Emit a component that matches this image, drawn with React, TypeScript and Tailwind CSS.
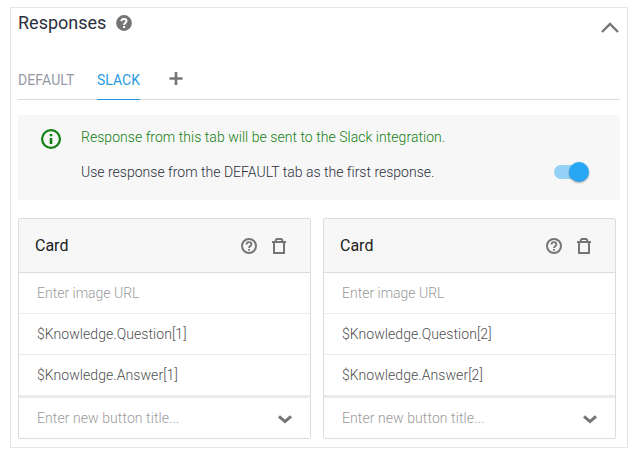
import React from "react";

function FilledHelp() {
  return (
    <svg className="block h-4 w-4" viewBox="0 0 16 16">
      <circle cx="8" cy="8" r="7.9" fill="#757575" />
      <path d="M5.4 6.2C5.5 4.7 6.5 3.9 8 3.9S10.5 4.8 10.5 6.1C10.5 7.8 8.1 7.8 8.1 9.9M8.1 10.9V12.9" fill="none" stroke="#fff" strokeWidth="2" />
    </svg>
  );
}

function OutlineHelp() {
  return (
    <svg className="block h-4 w-4" viewBox="0 0 16 16" fill="none" stroke="#757575">
      <circle cx="8" cy="8" r="7" strokeWidth="2" />
      <path d="M5.6 6.5C5.6 5.1 6.5 4.2 8 4.2S10.4 5.1 10.4 6.4C10.4 7.9 8 8 8 10M8 11V12.8" strokeWidth="1.8" />
    </svg>
  );
}

function Trash() {
  return (
    <svg className="block h-4 w-[14px]" viewBox="0 0 14 16" fill="none" stroke="#757575" strokeWidth="2">
      <path d="M0 4H14" />
      <path d="M3.8 3.5V2L4.8 1H9.2L10.2 2V3.5" />
      <path d="M2 4V15H12V4" />
    </svg>
  );
}

function Field({ text, placeholder }: { text: string; placeholder?: boolean }) {
  return (
    <div className={`flex h-10 items-center pl-[18px] ${placeholder ? "text-[#9b9b9b]" : "tracking-[0.06px] text-[#4f4f4f]"}`}>
      {text}
    </div>
  );
}

function Card({ index }: { index: number }) {
  return (
    <section className="w-[293px] rounded-[2px] border border-[#dcdcdc] bg-white font-light">
      <header className="flex h-[54px] items-center border-b border-[#dcdcdc] bg-[#f7f7f7] pr-6 pl-4">
        <h2 className="flex-1 text-[16px] font-normal text-[#212121]">Card</h2>
        <div className="flex gap-[15px]">
          <OutlineHelp />
          <Trash />
        </div>
      </header>
      <div className="border-b border-[#ebebeb]">
        <Field text="Enter image URL" placeholder />
      </div>
      <div className="border-b border-[#ebebeb]">
        <Field text={`$Knowledge.Question[${index}]`} />
      </div>
      <div className="border-b-[3px] border-[#ebebeb]">
        <Field text={`$Knowledge.Answer[${index}]`} />
      </div>
      <div className="flex items-center justify-between pr-[18px] tracking-[0.08px]">
        <Field text="Enter new button title..." placeholder />
        <svg className="mt-[3px] block h-[9px] w-[14px]" viewBox="0 0 14 9" fill="none" stroke="#757575" strokeWidth="3">
          <path d="M1 1.3L7 6.6L13 1.3" />
        </svg>
      </div>
    </section>
  );
}

export default function App() {
  return (
    <div className="h-[459px] w-[639px] bg-white pt-[7px] pl-[10px] font-['Roboto',sans-serif] text-[14px] leading-5">
      <main className="h-[441px] w-[618px] border border-[#e6e6e8] px-[7px]">
        <div className="flex h-[52px] justify-between">
          <div className="flex h-[30px] items-center gap-[10px]">
            <h1 className="text-[18px] leading-6 text-[#2b303d]">Responses</h1>
            <FilledHelp />
          </div>
          <svg className="mt-[14px] mr-px block h-[11px] w-[18px]" viewBox="0 0 18 11" fill="none" stroke="#757575" strokeWidth="2.4">
            <path d="M1 10L9 2L17 10" />
          </svg>
        </div>
        <nav className="flex h-10 border-b border-[#dadada]">
          <span className="h-10 w-[57px] pt-[10px] tracking-[0.1px] text-[#9599a6]">DEFAULT</span>
          <span className="ml-[22px] h-10 w-[43px] border-b border-[#2196dc] pt-[10px] text-[#2a9be0]">SLACK</span>
          <svg className="mt-3 ml-[29px] block h-[13px] w-[14px]" viewBox="0 0 14 13" stroke="#757575" strokeWidth="2.6">
            <path d="M0.5 6.5H13.5M7 0V13" />
          </svg>
        </nav>
        <section className="mt-[15px] flex h-[85px] bg-[#f7f7f7] pt-3 pl-[23px] font-light">
          <svg className="mt-[2px] block h-5 w-5" viewBox="0 0 20 20" fill="none" stroke="#128012">
            <circle cx="10" cy="10" r="8.9" strokeWidth="2.2" />
            <path d="M10 9V15M10 5V7.2" strokeWidth="2.6" />
          </svg>
          <div className="ml-5 flex-1">
            <p className="tracking-[0.04px] text-[#128012]">Response from this tab will be sent to the Slack integration.</p>
            <div className="mt-[15px] flex justify-between pr-[31px]">
              <p className="tracking-[0.01px] text-[#2b303d]">Use response from the DEFAULT tab as the first response.</p>
              <div className="flex h-5 w-[35px] items-center">
                <div className="h-[14px] w-[30px] rounded-full bg-[#93d1f6]" />
                <div className="-ml-[15px] h-5 w-5 shrink-0 rounded-full bg-[#28a7f4] shadow-[0_1px_2px_rgba(0,0,0,0.35)]" />
              </div>
            </div>
          </div>
        </section>
        <div className="mt-[18px] flex gap-3">
          <Card index={1} />
          <Card index={2} />
        </div>
      </main>
    </div>
  );
}
